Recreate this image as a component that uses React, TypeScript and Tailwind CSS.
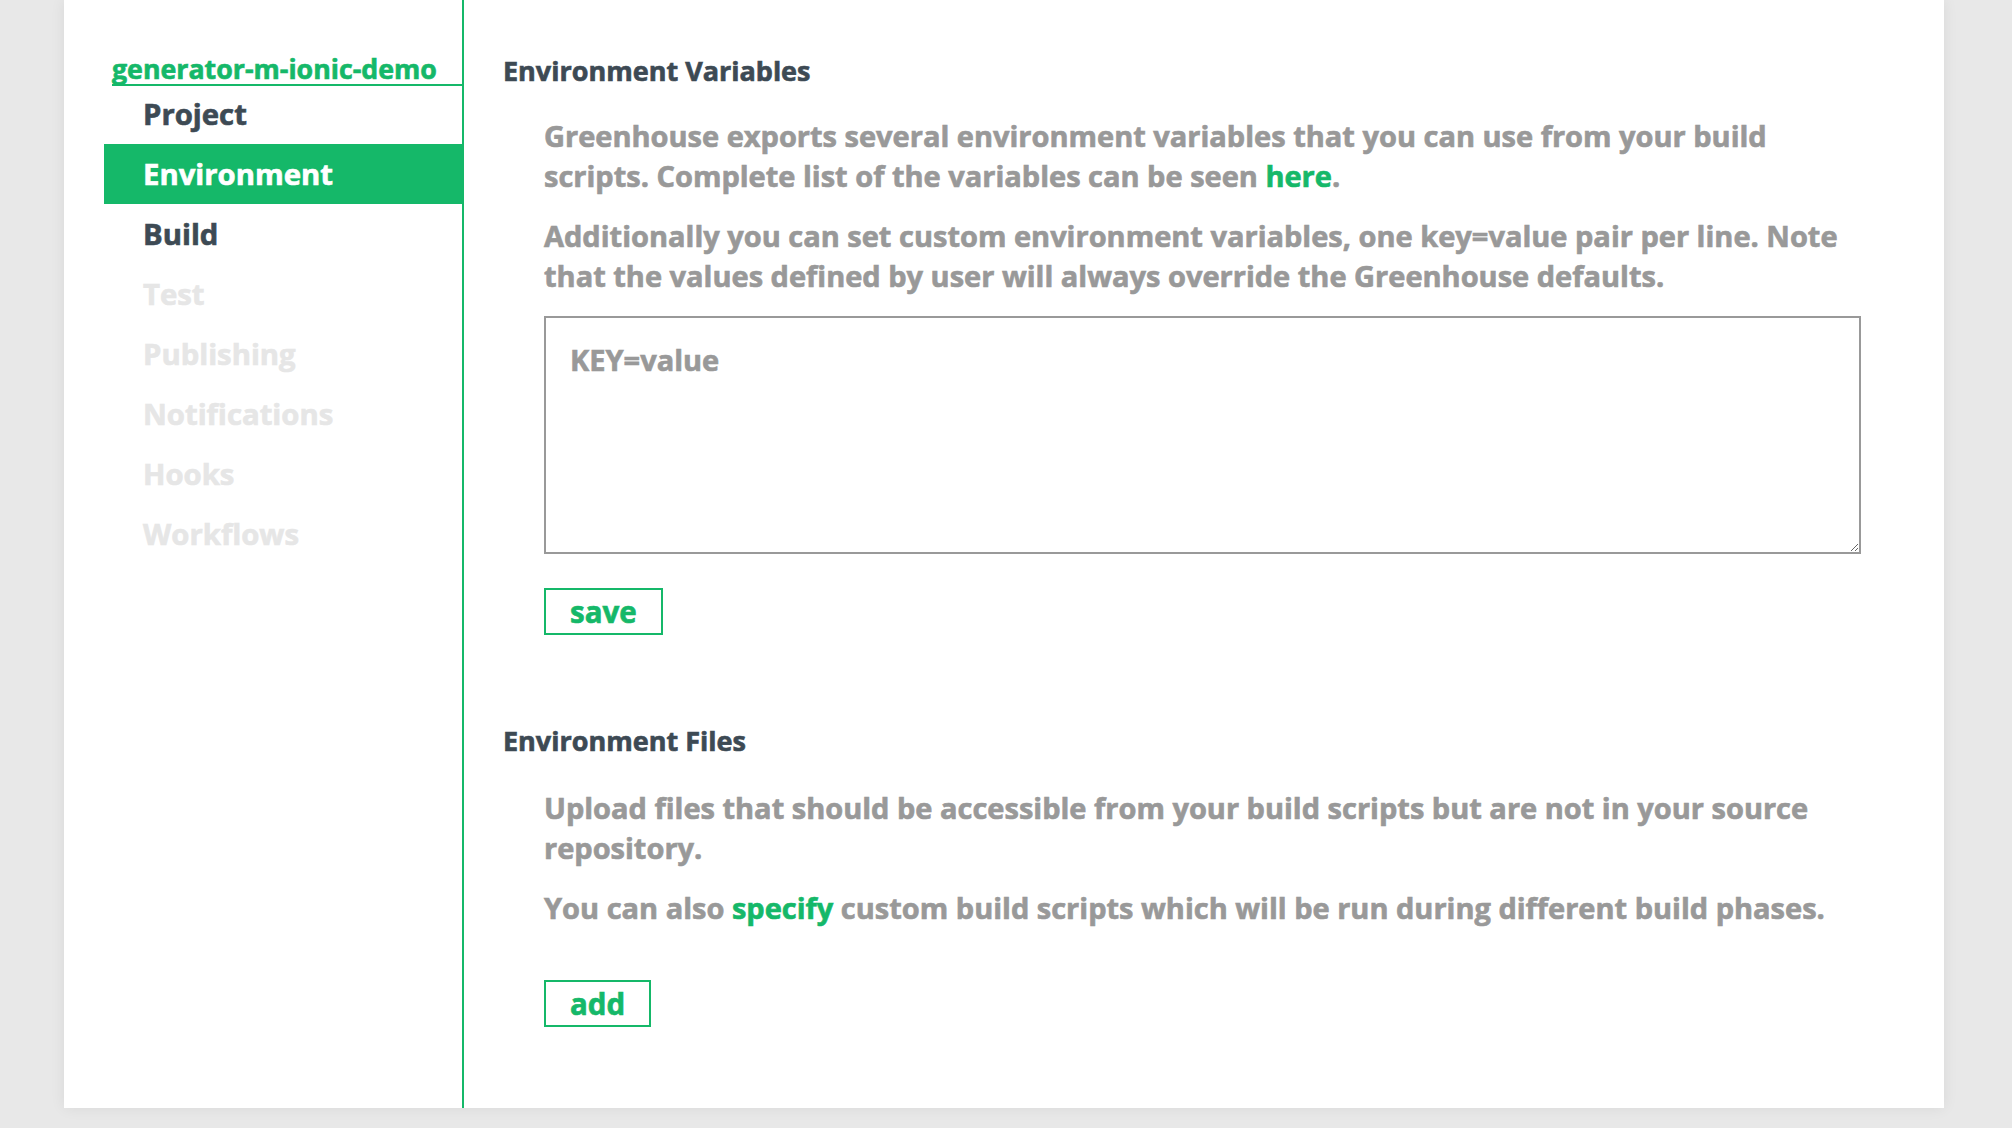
import React from "react";

const navItems: { label: string; state: "normal" | "active" | "disabled" }[] = [
  { label: "Project", state: "normal" },
  { label: "Environment", state: "active" },
  { label: "Build", state: "normal" },
  { label: "Test", state: "disabled" },
  { label: "Publishing", state: "disabled" },
  { label: "Notifications", state: "disabled" },
  { label: "Hooks", state: "disabled" },
  { label: "Workflows", state: "disabled" },
];

export default function App() {
  return (
    <div className="min-h-screen bg-[#e8e8e8] pl-16 font-['Open_Sans',sans-serif] font-bold [-webkit-text-stroke:0.65px_currentColor]">
      <div className="flex h-[1108px] w-[1880px] bg-white shadow-[0_0_14px_rgba(0,0,0,0.07)]">
        <aside className="w-[400px] shrink-0 border-r-2 border-[#15b869] pl-10">
          <div className="ml-2 border-b-2 border-[#15b869] pt-[53px] text-[26.75px] leading-[31px] text-[#15b869]">
            generator-m-ionic-demo
          </div>
          <nav className="-mt-[2px] flex flex-col">
            {navItems.map((item) => (
              <div
                key={item.label}
                className={
                  item.state === "active"
                    ? "h-[60px] bg-[#15b869] pl-[39px] text-[29.3px] leading-[60px] text-white"
                    : item.state === "normal"
                    ? "h-[60px] pl-[39px] text-[29.3px] leading-[60px] text-[#3d4a54]"
                    : "h-[60px] pl-[39px] text-[29.3px] leading-[60px] text-[#e6e6e6]"
                }
              >
                {item.label}
              </div>
            ))}
          </nav>
        </aside>

        <main className="flex-1 pl-[39px] pr-[83px]">
          <section className="pt-[51px]">
            <h2 className="text-[27px] leading-[40px] text-[#3d4a54]">Environment Variables</h2>
            <div className="pl-[41px]">
              <p className="mt-[25px] text-[29px] leading-[40px] text-[#999999]">
                Greenhouse exports several environment variables that you can use from your build scripts. Complete
                list of the variables can be seen <span className="text-[#15b869]">here</span>.
              </p>
              <p className="mt-[20px] text-[29px] leading-[40px] text-[#999999]">
                Additionally you can set custom environment variables, one key=value pair per line. Note that the
                values defined by user will always override the Greenhouse defaults.
              </p>
              <textarea
                placeholder="KEY=value"
                className="mt-[20px] block h-[238px] w-full resize-y border-2 border-[#999999] px-[24px] pt-[22px] font-['Open_Sans',sans-serif] text-[29px] font-bold leading-[40px] text-[#555] outline-none placeholder:text-[#999999]"
              />
              <button className="mt-[34px] block h-[47px] border-2 border-[#15b869] px-6 text-[29.5px] leading-[43px] text-[#15b869]">
                save
              </button>
            </div>
          </section>

          <section className="mt-[86px]">
            <h2 className="text-[27px] leading-[40px] text-[#3d4a54]">Environment Files</h2>
            <div className="pl-[41px]">
              <p className="mt-[27px] text-[29px] leading-[40px] text-[#999999]">
                Upload files that should be accessible from your build scripts but are not in your source repository.
              </p>
              <p className="mt-[20px] text-[29px] leading-[40px] text-[#999999]">
                You can also <span className="text-[#15b869]">specify</span> custom build scripts which will be run
                during different build phases.
              </p>
              <button className="mt-[52px] block h-[47px] border-2 border-[#15b869] px-6 text-[29.5px] leading-[43px] text-[#15b869]">
                add
              </button>
            </div>
          </section>
        </main>
      </div>
    </div>
  );
}
